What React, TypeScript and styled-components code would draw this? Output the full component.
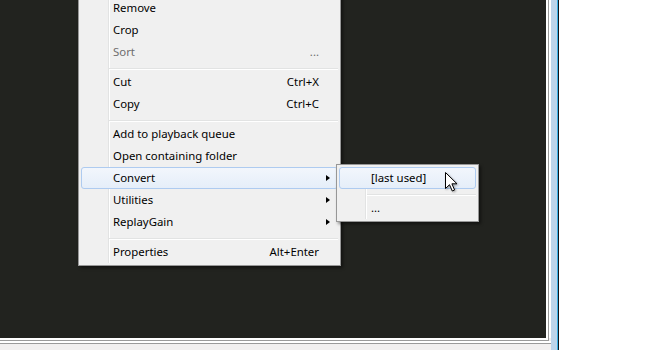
import React from "react";
import styled, { createGlobalStyle } from "styled-components";

type Entry =
  | { kind: "item"; label: string; shortcut?: string; sub?: boolean; disabled?: boolean; hot?: boolean }
  | { kind: "sep" };

const mainMenu: Entry[] = [
  { kind: "item", label: "Remove" },
  { kind: "item", label: "Crop" },
  { kind: "item", label: "Sort", shortcut: "...", disabled: true },
  { kind: "sep" },
  { kind: "item", label: "Cut", shortcut: "Ctrl+X" },
  { kind: "item", label: "Copy", shortcut: "Ctrl+C" },
  { kind: "sep" },
  { kind: "item", label: "Add to playback queue" },
  { kind: "item", label: "Open containing folder" },
  { kind: "item", label: "Convert", sub: true, hot: true },
  { kind: "item", label: "Utilities", sub: true },
  { kind: "item", label: "ReplayGain", sub: true },
  { kind: "sep" },
  { kind: "item", label: "Properties", shortcut: "Alt+Enter" },
];

const convertMenu: Entry[] = [
  { kind: "item", label: "[last used]", hot: true },
  { kind: "sep" },
  { kind: "item", label: "..." },
];

export default function App() {
  return (
    <>
      <GlobalStyle />
      <Window>
        <LeftPane>
          <Playlist>
            <PopupMenu entries={mainMenu} $left={78} $top={-6} $width={263} />
            <PopupMenu entries={convertMenu} $left={336} $top={164} $width={143} $sub />
            <Cursor width="14" height="21" viewBox="0 0 14 21">
              <path
                d="M0.5 0.5 L0.5 16.5 L4.5 12.7 L7.3 19 L9.6 18 L6.9 11.8 L12 11.8 Z"
                fill="#fff"
                stroke="#000"
                strokeWidth="1"
                strokeLinejoin="miter"
              />
            </Cursor>
          </Playlist>
          <StatusBar />
        </LeftPane>
        <Splitter />
        <RightPane />
      </Window>
    </>
  );
}

function PopupMenu({
  entries,
  $left,
  $top,
  $width,
  $sub,
}: {
  entries: Entry[];
  $left: number;
  $top: number;
  $width: number;
  $sub?: boolean;
}) {
  return (
    <Menu $left={$left} $top={$top} $width={$width} $sub={$sub}>
      {entries.map((e, i) =>
        e.kind === "sep" ? (
          <Separator key={i} />
        ) : (
          <Item key={i} $hot={e.hot} $disabled={e.disabled}>
            <Label>{e.label}</Label>
            <Shortcut $disabled={e.disabled}>{e.shortcut}</Shortcut>
            <Arrow>{e.sub && <Triangle />}</Arrow>
          </Item>
        )
      )}
    </Menu>
  );
}

// === Styled Components ===

const GlobalStyle = createGlobalStyle`
  html, body {
    margin: 0;
    padding: 0;
    background: #fff;
    overflow: hidden;
  }
  body {
    font-family: "Segoe UI", "Noto Sans", "Liberation Sans", sans-serif;
    font-size: 11.4px;
    -webkit-font-smoothing: antialiased;
  }
`;

const Window = styled.div`
  display: flex;
  width: 650px;
  height: 350px;
  overflow: hidden;
`;

const LeftPane = styled.div`
  display: flex;
  flex-direction: column;
  width: 551px;
  flex-shrink: 0;
  background: #f1efef;
`;

const Playlist = styled.div`
  position: relative;
  height: 338px;
  width: 546px;
  background: #22231f;
  /* sunken frame: white, gray, white */
  box-shadow: 2px 0 0 #fff, 3px 0 0 #9a9a9a, 5px 0 0 #fff, 0 2px 0 #fff, 2px 2px 0 #fff,
    0 3px 0 #9a9a9a, 3px 3px 0 #9a9a9a;
`;

const StatusBar = styled.div`
  margin-top: 3px;
  border-top: 2px solid #fff;
  border-bottom: 1px solid #9a9a9a;
  height: 0;
  width: 551px;
`;

const Splitter = styled.div`
  width: 6px;
  flex-shrink: 0;
  background: #bcd4ea;
  border-right: 1px solid #3ab0e6;
`;

const RightPane = styled.div`
  flex: 1;
  background: #fff;
  border-left: 1px solid #10131a;
`;

const Menu = styled.div<{ $left: number; $top: number; $width: number; $sub?: boolean }>`
  position: absolute;
  left: ${(p) => p.$left}px;
  top: ${(p) => p.$top}px;
  width: ${(p) => p.$width}px;
  box-sizing: border-box;
  padding: 2px;
  background: #f0f0f0;
  border: 1px solid #979797;
  box-shadow: 2px 2px 3px rgba(0, 0, 0, 0.45);
  z-index: ${(p) => (p.$sub ? 2 : 1)};

  &::before {
    content: "";
    position: absolute;
    top: 2px;
    bottom: 2px;
    left: ${(p) => (p.$sub ? 28 : 29)}px;
    width: 1px;
    background: #e2e3e3;
    box-shadow: 1px 0 0 #fff;
  }
`;

const Item = styled.div<{ $hot?: boolean; $disabled?: boolean }>`
  position: relative;
  display: grid;
  grid-template-columns: 1fr auto 18px;
  align-items: center;
  height: 22px;
  box-sizing: border-box;
  padding-left: 32px;
  color: ${(p) => (p.$disabled ? "#6d6d6d" : "#000")};
  border: 1px solid ${(p) => (p.$hot ? "#aecbf0" : "transparent")};
  border-radius: 3px;
  background: ${(p) =>
    p.$hot ? "linear-gradient(to bottom, #f2f6fc, #e5eef9)" : "transparent"};
  z-index: 1;
  white-space: nowrap;
`;

const Label = styled.span`
  margin-left: -1px;
  line-height: 20px;
`;

const Shortcut = styled.span<{ $disabled?: boolean }>`
  color: ${(p) => (p.$disabled ? "#6d6d6d" : "#000")};
  line-height: 20px;
`;

const Arrow = styled.span`
  display: flex;
  justify-content: flex-end;
  padding-right: 7px;
`;

const Triangle = styled.span`
  width: 0;
  height: 0;
  border-top: 3.5px solid transparent;
  border-bottom: 3.5px solid transparent;
  border-left: 4px solid #000;
`;

const Separator = styled.div`
  position: relative;
  margin: 5px 0 1px 28px;
  height: 0;
  border-top: 1px solid #e2e3e3;
  border-bottom: 1px solid #fff;
  z-index: 1;
`;

const Cursor = styled.svg`
  position: absolute;
  left: 445px;
  top: 172px;
  z-index: 3;
  filter: drop-shadow(1px 1px 1px rgba(0, 0, 0, 0.35));
`;
